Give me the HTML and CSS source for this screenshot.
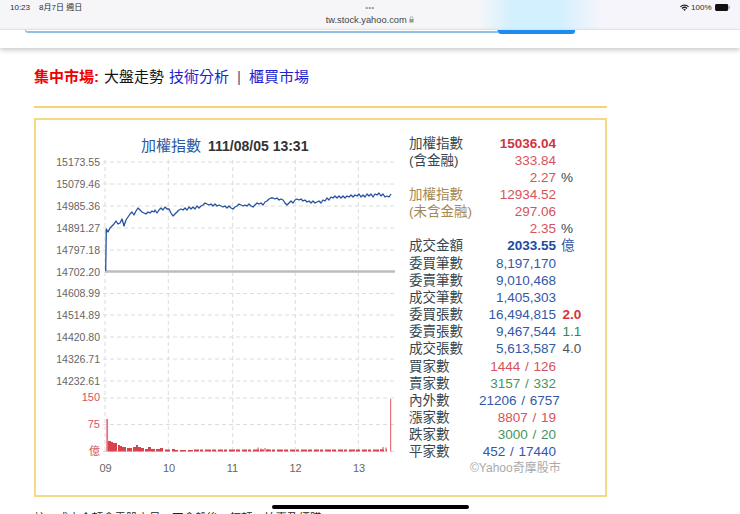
FILE: index.html
```html
<!DOCTYPE html>
<html lang="zh-Hant">
<head>
<meta charset="utf-8">
<title>集中市場 大盤走勢</title>
<link rel="stylesheet" href="styles.css">
</head>
<body>
<header class="browser-bar">
  <div class="status-left"><span>10:23</span><span>8月7日 週日</span></div>
  <div class="address">
    <div class="dots">•••</div>
    <div class="url">tw.stock.yahoo.com
      <svg class="lock" viewBox="0 0 6 8"><path d="M1.3 3.5V2.2a1.7 1.7 0 0 1 3.4 0v1.3" class="lock-loop"/><rect x="0.5" y="3.4" width="5" height="4.2" rx="0.6" class="lock-body"/></svg>
    </div>
  </div>
  <div class="status-right">
    <svg class="wifi" viewBox="0 0 12 9"><path d="M0 3a8.5 8.5 0 0 1 12 0l-1.2 1.3a6.8 6.8 0 0 0-9.6 0zM2.1 5.2a5.6 5.6 0 0 1 7.8 0L8.7 6.4a3.9 3.9 0 0 0-5.4 0zM4.2 7.3a2.6 2.6 0 0 1 3.6 0L6 9z"/></svg>
    <span>100%</span>
    <svg class="battery" viewBox="0 0 17 8"><rect x="0" y="0" width="15" height="8" rx="1.6"/><rect x="15.6" y="2.6" width="1.2" height="2.8" rx="0.5" class="battery-cap"/></svg>
  </div>
</header>

<div class="site-header">
  <div class="search">
    <div class="search-input"></div>
    <div class="search-button"></div>
  </div>
</div>

<main class="page">
  <nav class="market-nav">
    <strong class="nav-title">集中市場:</strong>
    <span class="nav-current">大盤走勢</span>
    <a class="nav-link">技術分析</a>
    <span class="nav-sep">|</span>
    <a class="nav-link">櫃買市場</a>
  </nav>
  <div class="rule"></div>

  <section class="panel">
    <svg class="chart" viewBox="36 120 373 375">
      <text x="141" y="151" class="title-name">加權指數</text>
      <text x="208" y="151" class="title-date">111/08/05 13:31</text>

      <path class="grid" d="M103 162H395M103 184H395M103 206H395M103 228H395M103 250H395M103 293.5H395M103 315H395M103 337H395M103 359H395M103 381H395M103 398H395M103 424.5H395M103 451.5H395"/>
      <path class="grid" d="M105 160V455M168.3 160V455M232.7 160V455M295.3 160V455M358.3 160V455"/>
      <path class="base" d="M105 271.6H395"/>

      <g class="y-labels">
        <text x="100" y="166">15173.55</text>
        <text x="100" y="188">15079.46</text>
        <text x="100" y="210">14985.36</text>
        <text x="100" y="231.500">14891.27</text>
        <text x="100" y="253.500">14797.18</text>
        <text x="100" y="275.500">14702.20</text>
        <text x="100" y="297">14608.99</text>
        <text x="100" y="318.500">14514.89</text>
        <text x="100" y="341">14420.80</text>
        <text x="100" y="363">14326.71</text>
        <text x="100" y="384.500">14232.61</text>
      </g>
      <g class="y-labels red-labels">
        <text x="100" y="401">150</text>
        <text x="100" y="427.500">75</text>
        <text x="100" y="454.500">億</text>
      </g>
      <g class="x-labels">
        <text x="105.500" y="472">09</text>
        <text x="169" y="472">10</text>
        <text x="232.500" y="472">11</text>
        <text x="295.500" y="472">12</text>
        <text x="359" y="472">13</text>
      </g>

      <rect x="106.300" y="419" width="1.800" height="32.500" class="spike"/>
      <rect x="390" y="399" width="1.200" height="52.500" class="spike"/>
      <polygon class="bars" points="108,451.500 108,441 111,441 111,442 113,442 113,443 117,443 117,451.500 118,451.500 118,445 120,445 120,446 122,446 122,447 126,447 126,451.500 127,451.500 127,448 132,448 132,451.500 133,451.500 133,447 136,447 136,445 138,445 138,447 141,447 141,448 144,448 144,451.500 145,451.500 145,449 148,449 148,447 151,447 151,449 155,449 155,451.500 156,451.500 156,449 160,449 160,448 163,448 163,451.500 165,451.500 165,449.500 170,449.500 170,451.500 172,451.500 172,449 175,449 175,450 178,450 178,451.500 180,451.500 180,450 186,450 186,451.500 188,451.500 188,450 193,450 193,451.500"/>
      <path class="bars-low" d="M194 450.500H387"/>
      <path class="bars-low-tall" d="M258 451V447.500M261 451V448.500M265 451V448M268 451V449M383 451V447M386 451V447.500M381 451V449"/>

      <polyline class="line" points="105.700,271 106.300,229 108,232 110,228 112,226 114,224 116,221 118,224 120,223 122,219 124,226 126,220 128,217 130,214 132,212 134,215 136,211 138,208 140,210 142,212 144,213 146,214 148,212 150,213 152,211 154,212 155,210 157,213 159,210 161,208 163,210 165,207 167,209 169,209 171,213 173,216 175,214 177,212 179,210 181,209 183,210 185,208 187,210 189,207 191,209 193,207 195,209 197,206 199,208 201,206 203,205 205,203 207,204 209,205 211,204 213,206 215,204 217,206 219,205 221,206 223,207 225,206 227,208 229,206 231,208 233,209 235,207 237,206 239,204 241,205 243,206 245,205 247,206 249,204 251,206 253,207 255,205 257,203 259,204 261,203 263,205 265,202 267,201 269,199 271,198 273,198 275,199 277,198 279,200 281,199 283,200 285,203 287,205 289,203 291,201 293,203 295,200 297,199 299,200 301,199 303,201 305,200 307,202 309,201 311,203 313,201 315,203 317,202 319,201 321,203 323,200 325,201 327,198 329,200 331,197 333,198 335,196 337,198 339,196 341,198 343,196 345,198 347,196 349,197 351,195 353,197 355,195 357,196 359,194 361,197 363,195 365,197 367,194 369,196 371,194 373,197 375,194 377,195 379,193 381,196 383,194 385,197 387,196 389,197 391,194"/>
    </svg>

    <div class="stats">
      <div class="label">加權指數</div><div class="val red bold">15036.04</div><div></div>
      <div class="label">(含金融)</div><div class="val red">333.84</div><div></div>
      <div></div><div class="val red">2.27</div><div class="unit">%</div>
      <div class="label brown">加權指數</div><div class="val red">12934.52</div><div></div>
      <div class="label brown">(未含金融)</div><div class="val red">297.06</div><div></div>
      <div></div><div class="val red">2.35</div><div class="unit">%</div>
      <div class="label">成交金額</div><div class="val deep bold">2033.55</div><div class="unit blue">億</div>
      <div class="label">委買筆數</div><div class="val blue">8,197,170</div><div></div>
      <div class="label">委賣筆數</div><div class="val blue">9,010,468</div><div></div>
      <div class="label">成交筆數</div><div class="val blue">1,405,303</div><div></div>
      <div class="label">委買張數</div><div class="val blue">16,494,815</div><div class="ratio ratio-red">2.0</div>
      <div class="label">委賣張數</div><div class="val blue">9,467,544</div><div class="ratio ratio-green">1.1</div>
      <div class="label">成交張數</div><div class="val blue">5,613,587</div><div class="ratio ratio-gray">4.0</div>
      <div class="label">買家數</div><div class="val red">1444 / 126</div><div></div>
      <div class="label">賣家數</div><div class="val green">3157 / 332</div><div></div>
      <div class="label">內外數</div><div class="val blue">21206 / 6757</div><div></div>
      <div class="label">漲家數</div><div class="val red">8807 / 19</div><div></div>
      <div class="label">跌家數</div><div class="val green">3000 / 20</div><div></div>
      <div class="label">平家數</div><div class="val blue">452 / 17440</div><div></div>
      <div class="copyright">©Yahoo奇摩股市</div>
    </div>
  </section>

  <p class="note">註：成交金額含零股交易，不含盤後、鉅額、拍賣及標購</p>
</main>

<div class="home-indicator"></div>
</body>
</html>
```

FILE: styles.css
```css
* { box-sizing: border-box; }

html, body {
  margin: 0;
  padding: 0;
  height: 514px;
  overflow: hidden;
  background: #fff;
  font-family: "Liberation Sans", "Noto Sans CJK TC", sans-serif;
}

.browser-bar {
  height: 29.500px;
  display: grid;
  grid-template-columns: 310px 100px 1fr;
  padding: 3px 10px 0;
  background: linear-gradient(90deg, #f6f6f8 478px, #d3f0fe 512px, #d3f0fe 560px, #f5f5fb 600px);
  border-bottom: 1px solid #ebebef;
  color: #2b2b2b;
  font-size: 8px;
}

.status-left {
  display: flex;
  gap: 9px;
  line-height: 9px;
}

.address {
  text-align: center;
  color: #444;
}

.dots {
  font-size: 7px;
  line-height: 9px;
  color: #888;
  letter-spacing: 0.5px;
}

.url {
  margin-top: 3px;
  font-size: 9.300px;
  line-height: 11px;
  white-space: nowrap;
}

.lock {
  width: 5px;
  height: 7px;
}

.lock-loop {
  fill: none;
  stroke: #999;
  stroke-width: 0.8;
}

.lock-body {
  fill: #999;
}

.status-right {
  display: flex;
  justify-content: flex-end;
  align-items: flex-start;
  gap: 2.500px;
  line-height: 9px;
}

.wifi {
  width: 9px;
  height: 7px;
  margin-top: 1px;
  fill: #222;
}

.battery {
  width: 15px;
  height: 7px;
  margin: 1px 0 0 1px;
  fill: #111;
}

.battery-cap {
  fill: #888;
}

.site-header {
  height: 18.500px;
  background: #fff;
  box-shadow: 0 2px 5px rgba(0, 0, 0, 0.22);
  position: relative;
}

.search {
  display: flex;
  margin-left: 25px;
  width: 550px;
  height: 4px;
}

.search-input {
  width: 473px;
  height: 3px;
  border: 1px solid #8fc1e8;
  border-top: 0;
  border-bottom-width: 2px;
  border-radius: 0 0 0 4px;
}

.search-button {
  flex: 1;
  background: #1d8cf0;
  border-radius: 0 0 3px 3px;
}

.page {
  padding-left: 34px;
  width: 607px;
}

.market-nav {
  margin-top: 19px;
  display: flex;
  align-items: center;
  height: 20px;
  font-size: 15px;
  line-height: 20px;
  white-space: nowrap;
}

.nav-title {
  color: #f00000;
  width: 70px;
}

.nav-current {
  color: #111;
  width: 65px;
}

.nav-link {
  color: #2222cc;
}

.nav-sep {
  color: #3a5a8c;
  width: 20px;
  text-align: center;
}

.rule {
  margin-top: 19px;
  height: 1.500px;
  background: #f5d272;
}

.panel {
  margin-top: 10.500px;
  height: 379px;
  display: flex;
  border: 2px solid #f7d983;
}

.chart {
  width: 373px;
  height: 375px;
  flex: none;
}

.title-name {
  font-size: 15px;
  fill: #2a57a0;
}

.title-date {
  font-size: 14px;
  font-weight: 700;
  fill: #333;
}

.grid {
  fill: none;
  stroke: #dcdcdc;
  stroke-width: 1;
  stroke-dasharray: 4 3;
}

.base {
  fill: none;
  stroke: #bdbdbd;
  stroke-width: 2.500;
}

.y-labels text {
  font-size: 10.500px;
  fill: #666;
  text-anchor: end;
}

.y-labels.red-labels text {
  fill: #d2555f;
  font-size: 11px;
}

.x-labels text {
  font-size: 11px;
  fill: #666;
  text-anchor: middle;
}

.spike {
  fill: #e5737d;
}

.bars {
  fill: #d8424e;
}

.bars-low {
  fill: none;
  stroke: #d8424e;
  stroke-width: 1.800;
  stroke-dasharray: 5 1 3 2 6 1 4 2;
}

.bars-low-tall {
  fill: none;
  stroke: #d8424e;
  stroke-width: 1;
}

.line {
  fill: none;
  stroke: #2450a0;
  stroke-width: 1.300;
  stroke-linejoin: round;
}

.stats {
  margin-top: 14.500px;
  width: 194px;
  height: 342px;
  display: grid;
  grid-template-columns: 65px 77px 40px;
  column-gap: 5px;
  grid-auto-rows: 17.170px;
  font-size: 13.500px;
  line-height: 17.170px;
  white-space: nowrap;
}

.label {
  color: #38474f;
}

.brown {
  color: #a58a4f;
}

.val {
  text-align: right;
  word-spacing: 1px;
}

.bold {
  font-weight: 700;
}

.red {
  color: #d7525c;
}

.val.red.bold {
  color: #cf3640;
}

.green {
  color: #4a9460;
}

.blue {
  color: #3358a8;
}

.deep {
  color: #1c4aa0;
}

.unit {
  color: #38474f;
}

.unit.blue {
  color: #3358a8;
}

.ratio {
  padding-left: 1.500px;
}

.ratio-red {
  color: #d8323c;
  font-weight: 700;
}

.ratio-green {
  color: #2e8a47;
}

.ratio-gray {
  color: #555;
}

.copyright {
  grid-column: 1 / -1;
  padding-left: 61px;
  font-size: 12px;
  color: #aaa;
}

.note {
  margin: 12.500px 0 0;
  font-size: 11.500px;
  line-height: 16px;
  color: #222;
  white-space: nowrap;
}

.home-indicator {
  position: fixed;
  left: 272px;
  top: 505px;
  width: 197px;
  height: 4px;
  border-radius: 2px;
  background: #000;
}
```
